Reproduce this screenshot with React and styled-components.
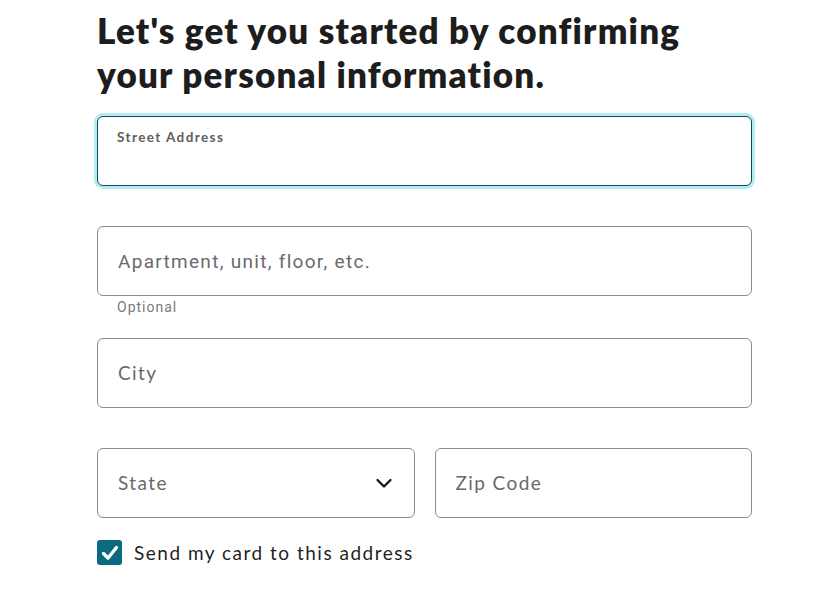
import React from 'react';
import styled, { createGlobalStyle } from 'styled-components';

const GlobalStyle = createGlobalStyle`
  body {
    margin: 0;
    background: #fff;
    font-family: Lato, "Noto Sans", sans-serif;
    color: #1f1f1f;
  }
`;

const Page = styled.div`
  width: 655px;
  padding: 8px 0 0 97px;
`;

const Heading = styled.h1`
  margin: 0 0 20px;
  font-size: 35px;
  line-height: 44px;
  font-weight: 800;
  letter-spacing: 1.2px;
  color: #1d1d1d;
`;

const FieldGroup = styled.div`
  margin-bottom: ${(p) => p.gap}px;
`;

const Box = styled.div`
  position: relative;
  display: flex;
  align-items: center;
  box-sizing: border-box;
  height: 70px;
  padding: 0 20px;
  border-radius: 6px;
  border: 1px solid ${(p) => (p.focused ? '#0d4c5a' : '#8c8c8c')};
  box-shadow: ${(p) => (p.focused ? '0 0 0 3px #b5ecf1' : 'none')};
  background: #fff;
`;

const FloatLabel = styled.span`
  position: absolute;
  top: 12px;
  left: 19px;
  font-size: 13.5px;
  font-weight: 700;
  color: #5e5e5e;
  letter-spacing: 1.4px;
`;

const Placeholder = styled.span`
  flex: 1;
  font-size: 19px;
  color: #6a6a6a;
  letter-spacing: ${(p) => (p.condensed ? '1.3px' : '1.4px')};
  padding-bottom: ${(p) => (p.condensed ? '0' : '2px')};
  font-family: ${(p) => (p.condensed ? 'Roboto, sans-serif' : 'Lato, sans-serif')};
`;

const Hint = styled.div`
  margin: 3px 0 0 20px;
  font-family: Roboto, sans-serif;
  font-size: 14px;
  color: #7a7a7a;
  letter-spacing: 1px;
`;

const Row = styled.div`
  display: grid;
  grid-template-columns: 1fr 1fr;
  gap: 20px;
  margin-bottom: 22px;
`;

const CheckRow = styled.label`
  display: flex;
  align-items: center;
  gap: 12px;
  font-size: 19px;
  color: #1f1f1f;
  letter-spacing: 1.5px;
`;

const CheckBox = styled.span`
  display: flex;
  align-items: center;
  justify-content: center;
  width: 25px;
  height: 25px;
  border-radius: 3px;
  background: #0c6a80;
`;

const Chevron = () => (
  <svg width="20" height="20" viewBox="0 0 20 20" fill="none">
    <path d="M3.5 7l6.5 6.5L16.5 7" stroke="#111" strokeWidth="2.2" strokeLinecap="round" strokeLinejoin="round" />
  </svg>
);

const Check = () => (
  <svg width="20" height="20" viewBox="0 0 20 20" fill="none">
    <path d="M3.5 10.5l4.5 4.5L16.5 4.5" stroke="#fff" strokeWidth="3.4" strokeLinecap="round" strokeLinejoin="round" />
  </svg>
);

export default function App() {
  return (
    <>
      <GlobalStyle />
      <Page>
        <Heading>
          Let's get you started by confirming
          <br />
          your personal information.
        </Heading>
        <FieldGroup gap={40}>
          <Box focused>
            <FloatLabel>Street Address</FloatLabel>
          </Box>
        </FieldGroup>
        <FieldGroup gap={23}>
          <Box>
            <Placeholder condensed>Apartment, unit, floor, etc.</Placeholder>
          </Box>
          <Hint>Optional</Hint>
        </FieldGroup>
        <FieldGroup gap={40}>
          <Box>
            <Placeholder>City</Placeholder>
          </Box>
        </FieldGroup>
        <Row>
          <Box>
            <Placeholder>State</Placeholder>
            <Chevron />
          </Box>
          <Box>
            <Placeholder>Zip Code</Placeholder>
          </Box>
        </Row>
        <CheckRow>
          <CheckBox>
            <Check />
          </CheckBox>
          Send my card to this address
        </CheckRow>
      </Page>
    </>
  );
}
